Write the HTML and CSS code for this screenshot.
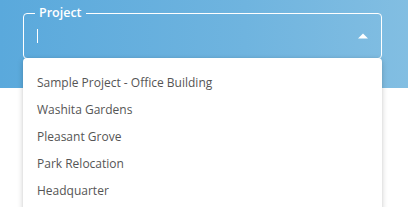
FILE: index.html
```html
<!DOCTYPE html>
<html>
<head>
<meta charset="utf-8">
<link rel="stylesheet" href="styles.css">
</head>
<body>
<div class="page">
  <div class="hero">
    <fieldset class="field">
      <legend class="label">Project</legend>
      <div class="row">
        <span class="caret"></span>
        <svg class="arrow" width="10" height="6" viewBox="0 0 10 6"><path d="M0 5.5 L5 0.5 L10 5.5 Z" fill="#fff"/></svg>
      </div>
    </fieldset>
  </div>
  <ul class="menu">
    <li>Sample Project - Office Building</li>
    <li>Washita Gardens</li>
    <li>Pleasant Grove</li>
    <li>Park Relocation</li>
    <li>Headquarter</li>
  </ul>
</div>
</body>
</html>
```
FILE: styles.css
```css
html, body {
  margin: 0;
  padding: 0;
  background: #fff;
  font-family: "Open Sans", "Liberation Sans", sans-serif;
}
.page {
  position: relative;
  width: 408px;
  height: 207px;
  overflow: hidden;
}
.hero {
  height: 88px;
  box-sizing: border-box;
  padding: 6px 26px 0 23px;
  background: linear-gradient(90deg, #5aa9dc 0%, #6fb4df 60%, #82bee2 100%);
}
.field {
  margin: 0;
  padding: 0 12px 0 13px;
  height: 53px;
  box-sizing: border-box;
  border: 1px solid #fff;
  border-radius: 4px;
}
.label {
  padding: 0 4px;
  margin-left: -2px;
  color: #fff;
  font-size: 12.5px;
  font-weight: 600;
  line-height: 14px;
}
.row {
  display: flex;
  align-items: center;
  justify-content: space-between;
  height: 32px;
}
.caret {
  display: block;
  width: 1px;
  height: 14px;
  background: #fff;
}
.arrow {
  display: block;
  margin-right: 1px;
}
.menu {
  position: absolute;
  top: 58px;
  left: 23px;
  width: 359px;
  height: 160px;
  margin: 0;
  padding: 11px 0 0;
  list-style: none;
  background: #fff;
  border-radius: 4px 4px 0 0;
  box-shadow: 0 2px 6px rgba(0,0,0,0.18), 0 0 2px rgba(0,0,0,0.08);
}
.menu li {
  height: 27px;
  line-height: 27px;
  padding-left: 14px;
  font-size: 12px;
  color: #555;
}
```
